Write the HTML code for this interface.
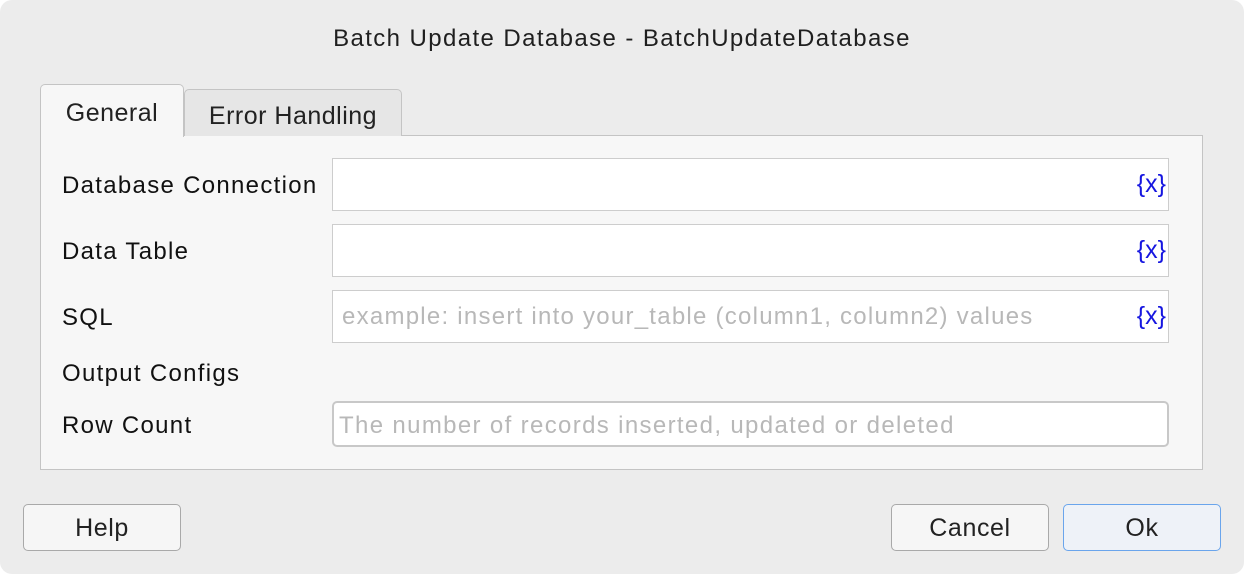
<!DOCTYPE html><html><head><style>
body{margin:0;width:1244px;height:574px;background:#fff;font-family:"Liberation Sans",sans-serif;overflow:hidden}
.win{position:absolute;left:0;top:0;width:1244px;height:574px;background:#ececec;border-radius:12px;}
.abs{position:absolute;white-space:nowrap}
.title{left:0;width:1244px;top:25px;text-align:center;font-size:24px;letter-spacing:1.4px;color:#1f1f1f}
.panel{left:40px;top:135px;width:1161px;height:333px;background:#f7f7f7;border:1px solid #c4c4c4}
.tab{border:1px solid #c4c4c4;border-bottom:none;border-radius:5px 5px 0 0;font-size:25px;letter-spacing:0.5px;color:#222;text-align:center;box-sizing:border-box}
.lbl{font-size:24px;letter-spacing:1.3px;color:#111;left:62px}
.inp{left:332px;width:837px;height:53px;background:#fff;border:1px solid #cdcdcd;box-sizing:border-box}
.x{position:absolute;right:2px;top:11px;color:#1616e0;font-size:25px}
.ph{position:absolute;left:9px;top:12px;color:#b8b8b8;font-size:24px;letter-spacing:1.25px}
.btn{top:504px;width:158px;height:47px;box-sizing:border-box;border:1px solid #a9a9a9;border-radius:5px;background:#f6f6f6;font-size:25px;letter-spacing:0.6px;text-align:center;line-height:47px;color:#222}
</style></head><body><div class="win">
<div class="abs title">Batch Update Database - BatchUpdateDatabase</div>
<div class="abs panel"></div>
<div class="abs tab" style="left:184px;top:89px;width:218px;height:47px;background:#e6e6e6;line-height:52px">Error Handling</div>
<div class="abs tab" style="left:40px;top:84px;width:144px;height:53px;background:#f7f7f7;line-height:56px">General</div>
<div class="abs lbl" style="top:172px">Database Connection</div>
<div class="abs inp" style="top:158px"><span class="x">{x}</span></div>
<div class="abs lbl" style="top:238px">Data Table</div>
<div class="abs inp" style="top:224px"><span class="x">{x}</span></div>
<div class="abs lbl" style="top:304px">SQL</div>
<div class="abs inp" style="top:290px"><span class="ph">example: insert into your_table (column1, column2) values</span><span class="x">{x}</span></div>
<div class="abs lbl" style="top:360px">Output Configs</div>
<div class="abs lbl" style="top:412px">Row Count</div>
<div class="abs inp" style="top:401px;height:46px;border:2px solid #c8c8c8;border-radius:5px"><span class="ph" style="left:5px;top:9px;letter-spacing:1.35px">The number of records inserted, updated or deleted</span></div>
<div class="abs btn" style="left:23px">Help</div>
<div class="abs btn" style="left:891px">Cancel</div>
<div class="abs btn" style="left:1063px;border-color:#6aa5ec;background:#eef2f8">Ok</div>
</div></body></html>
